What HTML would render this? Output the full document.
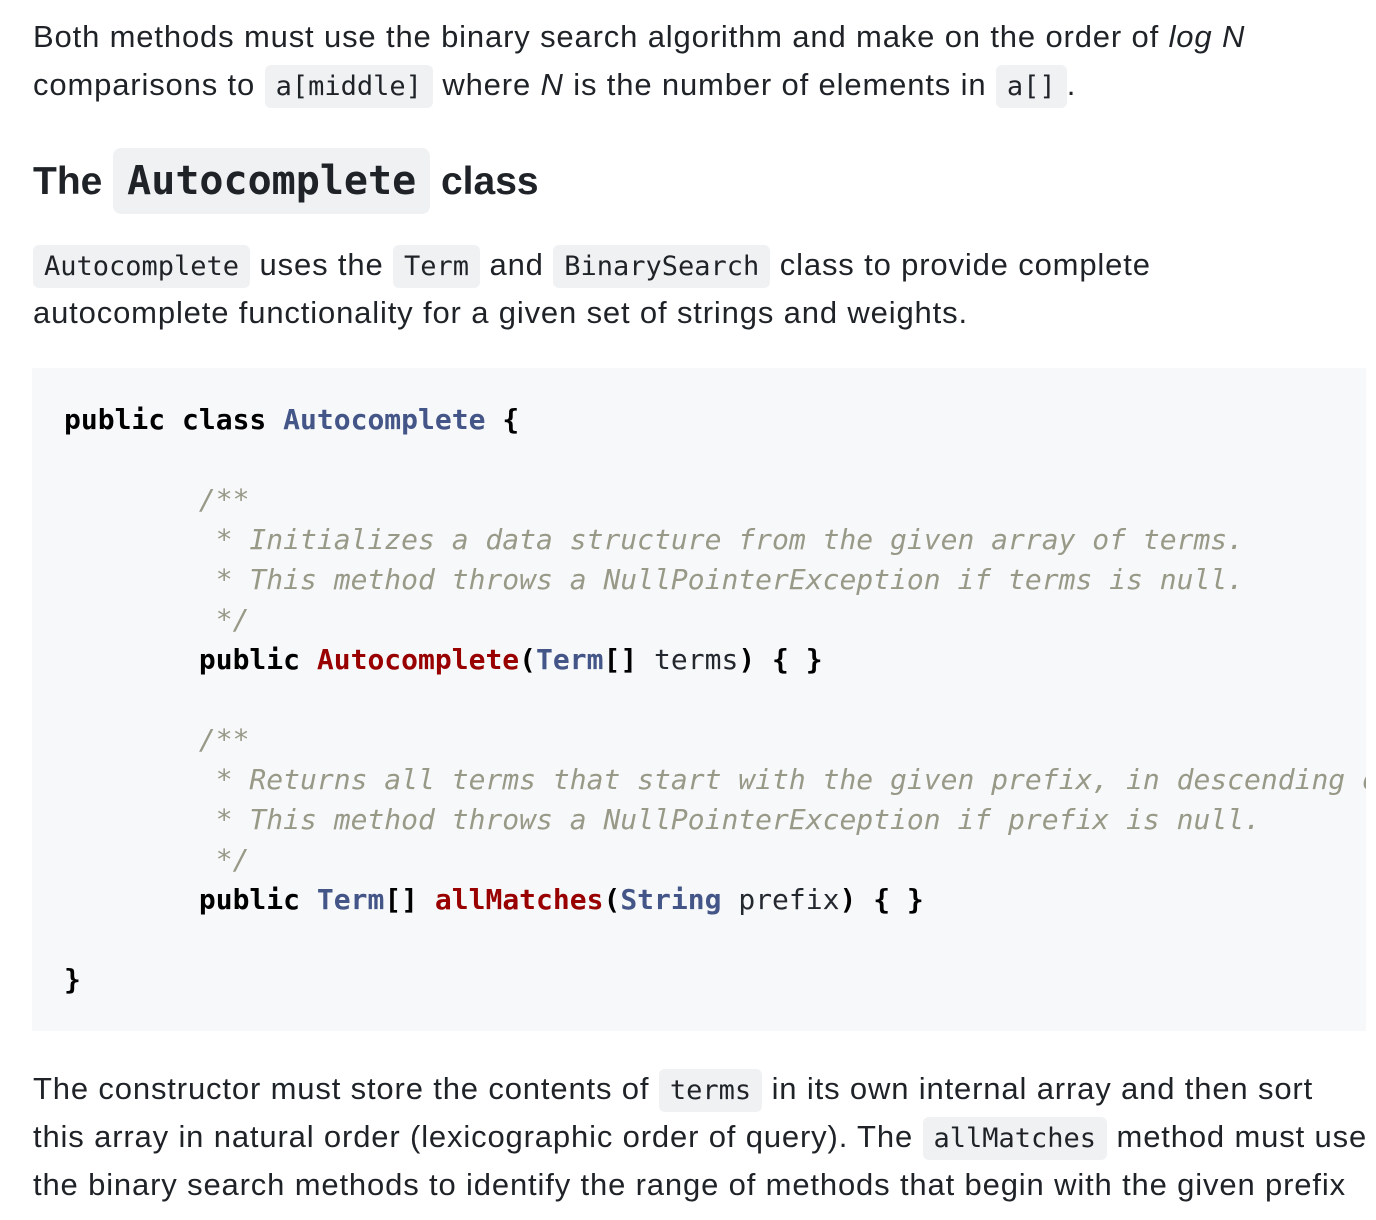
<!DOCTYPE html>
<html><head><meta charset="utf-8"><style>
body{margin:0;background:#fff;width:1376px;height:1220px;overflow:hidden;position:relative;color:#1f2328;font-family:"Liberation Sans",Arial,sans-serif;}
.p{position:absolute;left:33px;font-size:31px;line-height:48px;white-space:nowrap;letter-spacing:0.85px}
.p div{height:48px}
code{font-family:"DejaVu Sans Mono","Liberation Mono",monospace;font-size:27px;line-height:1;background:#eff1f3;border-radius:6px;padding:6px 11px;letter-spacing:0}
h2{position:absolute;left:33px;top:152px;margin:0;font-size:39px;line-height:60px;font-weight:bold;white-space:nowrap}
h2 code{font-size:40px;padding:10px 14px;border-radius:8px}
pre{position:absolute;left:32px;top:368px;width:1334px;height:663px;margin:0;background:#f6f8fa;overflow:hidden;box-sizing:border-box;padding:32px 0 0 32px;font-family:"DejaVu Sans Mono","Liberation Mono",monospace;font-size:28px;line-height:40px;color:#24292f}
.k{font-weight:bold;color:#000}.t{color:#445588;font-weight:bold}.f{color:#990000;font-weight:bold}.c{color:#999988;font-style:italic}
</style></head><body>
<div class="p" style="top:13px"><div>Both methods must use the binary search algorithm and make on the order of <i>log N</i></div><div>comparisons to <code>a[middle]</code> where <i>N</i> is the number of elements in <code>a[]</code>.</div></div>
<h2>The <code>Autocomplete</code> class</h2>
<div class="p" style="top:241px"><div><code>Autocomplete</code> uses the <code>Term</code> and <code>BinarySearch</code> class to provide complete</div><div>autocomplete functionality for a given set of strings and weights.</div></div>
<pre><span class="k">public class</span> <span class="t">Autocomplete</span> <span class="k">{</span>

        <span class="c">/**
         * Initializes a data structure from the given array of terms.
         * This method throws a NullPointerException if terms is null.
         */</span>
        <span class="k">public</span> <span class="f">Autocomplete</span><span class="k">(</span><span class="t">Term</span><span class="k">[]</span> terms<span class="k">) { }</span>

        <span class="c">/**
         * Returns all terms that start with the given prefix, in descending order of weight.
         * This method throws a NullPointerException if prefix is null.
         */</span>
        <span class="k">public</span> <span class="t">Term</span><span class="k">[]</span> <span class="f">allMatches</span><span class="k">(</span><span class="t">String</span> prefix<span class="k">) { }</span>

<span class="k">}</span></pre>
<div class="p" style="top:1065px"><div>The constructor must store the contents of <code>terms</code> in its own internal array and then sort</div><div>this array in natural order (lexicographic order of query). The <code>allMatches</code> method must use</div><div>the binary search methods to identify the range of methods that begin with the given prefix</div></div>
</body></html>
